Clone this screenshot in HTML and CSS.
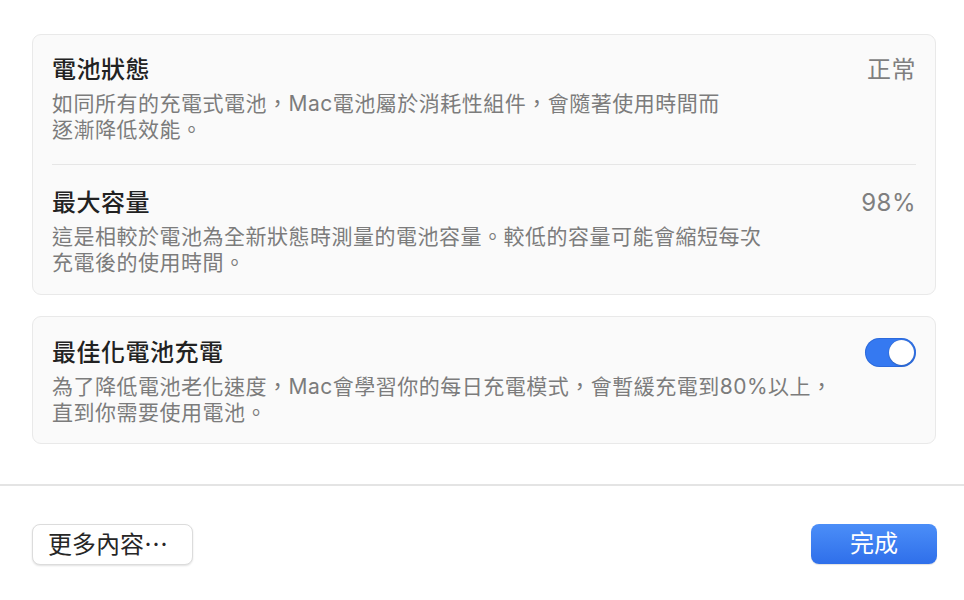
FILE: index.html
```html
<!DOCTYPE html>
<html lang="zh-Hant">
<head>
<meta charset="utf-8">
<title>電池</title>
<link rel="stylesheet" href="styles.css">
</head>
<body>
<main class="content">
  <section class="card">
    <div class="row row-first">
      <div class="text">
        <div class="title">電池狀態</div>
        <div class="desc">如同所有的充電式電池，Mac電池屬於消耗性組件，會隨著使用時間而<br>逐漸降低效能。</div>
      </div>
      <div class="value">正常</div>
    </div>
    <div class="row row-second">
      <div class="text">
        <div class="title">最大容量</div>
        <div class="desc">這是相較於電池為全新狀態時測量的電池容量。較低的容量可能會縮短每次<br>充電後的使用時間。</div>
      </div>
      <div class="value">98%</div>
    </div>
  </section>
  <section class="card">
    <div class="row row-single">
      <div class="text">
        <div class="title">最佳化電池充電</div>
        <div class="desc">為了降低電池老化速度，Mac會學習你的每日充電模式，會暫緩充電到80%以上，<br>直到你需要使用電池。</div>
      </div>
      <div class="switch" role="switch" aria-checked="true"><span class="knob"></span></div>
    </div>
  </section>
</main>
<footer class="footer">
  <button class="btn btn-plain">更多內容⋯</button>
  <button class="btn btn-primary">完成</button>
</footer>
</body>
</html>
```
FILE: styles.css
```css
* { box-sizing: border-box; }
html, body { margin: 0; padding: 0; }
body {
  width: 964px;
  height: 600px;
  background: #ffffff;
  font-family: "Inter", "Noto Sans CJK TC", "Noto Sans", sans-serif;
  color: #262626;
  overflow: hidden;
}
.content {
  padding: 34px 28px 0 32px;
  display: flex;
  flex-direction: column;
  gap: 21px;
}
.card {
  background: #fafafa;
  border: 1px solid #e9e9e9;
  border-radius: 9px;
  padding: 0 19px;
}
.row {
  display: flex;
  justify-content: space-between;
  align-items: flex-start;
}
.row-first {
  padding: 20px 0 21px;
  border-bottom: 1px solid #e6e6e6;
}
.row-second {
  padding: 23px 0 18px;
}
.row-single {
  padding: 21px 0 17px;
}
.title {
  font-size: 24px;
  line-height: 30px;
  font-weight: 500;
  letter-spacing: 0.5px;
  color: #222222;
}
.desc {
  margin-top: 6px;
  font-size: 21px;
  line-height: 26px;
  letter-spacing: 0.5px;
  color: #7c7c7c;
}
.value {
  font-size: 24px;
  line-height: 30px;
  letter-spacing: 0.5px;
  color: #7f7f7f;
}
.switch {
  width: 51px;
  height: 29px;
  border-radius: 15px;
  background: #3579f1;
  box-shadow: inset 0 0 0 1px rgba(30, 80, 180, 0.35);
  display: flex;
  justify-content: flex-end;
  align-items: center;
  padding: 2px;
}
.knob {
  width: 25px;
  height: 25px;
  border-radius: 50%;
  background: #ffffff;
  box-shadow: 0 0 1px rgba(0, 0, 0, 0.3), 0 1px 2px rgba(0, 0, 0, 0.15);
}
.footer {
  margin-top: 40px;
  border-top: 2px solid #e4e4e4;
  padding: 38px 27px 0 32px;
  display: flex;
  justify-content: space-between;
}
.btn {
  font-family: "Inter", "Noto Sans CJK TC", "Noto Sans", sans-serif;
  font-size: 24px;
  line-height: 30px;
  height: 41px;
  border-radius: 8px;
  padding: 0 15px;
  cursor: default;
}
.btn-plain {
  width: 161px;
  background: #ffffff;
  color: #262626;
  border: 1px solid #dcdcdc;
  box-shadow: 0 1px 2px rgba(0, 0, 0, 0.12);
  text-align: left;
}
.btn-primary {
  width: 126px;
  height: 40px;
  color: #ffffff;
  border: none;
  background: linear-gradient(#4b8ef8, #2f6fea);
  box-shadow: 0 1px 1px rgba(0, 0, 0, 0.12);
}
```
